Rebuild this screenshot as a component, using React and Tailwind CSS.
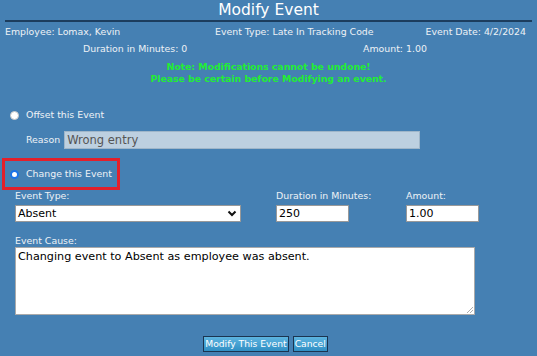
export default function App() {
  return (
    <div className="w-[537px] h-[356px] overflow-hidden bg-[#4580b3] text-[#eef2f6] font-['DejaVu_Sans',Verdana,sans-serif] text-[9.4px]">
      {/* Title */}
      <div className="mx-[5px] h-[22px] border-b-2 border-[#1c3d5e] text-center text-[15.5px] leading-[20px] text-white">
        Modify Event
      </div>

      {/* Summary */}
      <div className="flex pl-[5px] pt-[4px] leading-[12px] whitespace-nowrap">
        <span className="w-[210px]">Employee: Lomax, Kevin</span>
        <span className="flex-1">Event Type: Late In Tracking Code</span>
        <span className="pr-[11px]">Event Date: 4/2/2024</span>
      </div>
      <div className="flex pt-[5px] leading-[12px] whitespace-nowrap">
        <span className="ml-[83px] w-[280px]">Duration in Minutes: 0</span>
        <span>Amount: 1.00</span>
      </div>

      <div className="mt-[6px] text-center font-bold text-[#22ee33] leading-[12px] text-[9.3px]">
        <div>Note: Modifications cannot be undone!</div>
        <div>Please be certain before Modifying an event.</div>
      </div>

      {/* Offset */}
      <div className="mt-[24px] h-[12px] flex items-center gap-[7px] pl-[10px]">
        <span className="w-[9px] h-[9px] rounded-full bg-white border border-[#c8c8c8]" />
        <span className="leading-[12px]">Offset this Event</span>
      </div>
      <div className="mt-[10px] h-[18px] flex items-center gap-[4px] pl-[26px]">
        <span>Reason</span>
        <div className="w-[356px] h-[18px] bg-[#bdd0e0] border border-[#9fb6c9] text-[#555] text-[11.5px] leading-[16px] px-[2px]">
          Wrong entry
        </div>
      </div>

      {/* Change */}
      <div className="mt-[9px] ml-[2px] w-[118px] h-[32px] border-[3px] border-[#e3202b] flex items-center gap-[7px] pl-[5px] whitespace-nowrap">
        <span className="w-[9px] h-[9px] rounded-full bg-white border-[2px] border-[#1a73e8]" />
        <span className="leading-[12px]">Change this Event</span>
      </div>

      <div className="flex pl-[15px] leading-[12px]">
        <div className="w-[261px]">
          <div>Event Type:</div>
          <div className="mt-[3px] w-[226px] h-[17px] bg-white border border-[#999] text-black text-[11px] leading-[15px] px-[2px] flex items-center justify-between">
            <span>Absent</span>
            <svg width="10" height="7" viewBox="0 0 10 7" className="mr-[1px]">
              <path d="M1.5 1.5 L5 5 L8.5 1.5" fill="none" stroke="#111" strokeWidth="2" />
            </svg>
          </div>
        </div>
        <div className="w-[130px]">
          <div>Duration in Minutes:</div>
          <div className="mt-[3px] w-[73px] h-[17px] bg-white border border-[#999] text-black text-[11px] leading-[15px] px-[2px]">
            250
          </div>
        </div>
        <div>
          <div>Amount:</div>
          <div className="mt-[3px] w-[73px] h-[17px] bg-white border border-[#999] text-black text-[11px] leading-[15px] px-[2px]">
            1.00
          </div>
        </div>
      </div>

      <div className="pl-[15px] mt-[13px] leading-[12px]">
        <div>Event Cause:</div>
        <div className="relative w-[460px] h-[68px] bg-white border border-[#aaa] text-black text-[11.2px] leading-[14px] px-[2px] pt-[2px]">
          Changing event to Absent as employee was absent.
          <svg width="6" height="6" viewBox="0 0 6 6" className="absolute right-[1px] bottom-[1px]">
            <path d="M0 6 L6 0 M3 6 L6 3" stroke="#999" strokeWidth="0.8" />
          </svg>
        </div>
      </div>

      <div className="mt-[21px] flex justify-center gap-[4px] pr-[6px]">
        <button className="h-[16px] px-[1px] border border-[#1b3450] bg-gradient-to-b from-[#5db4e0] to-[#2f8fc4] text-white text-[9.2px] leading-[12px]">
          Modify This Event
        </button>
        <button className="h-[16px] px-[1px] border border-[#1b3450] bg-gradient-to-b from-[#5db4e0] to-[#2f8fc4] text-white text-[9.2px] leading-[12px]">
          Cancel
        </button>
      </div>
    </div>
  )
}
